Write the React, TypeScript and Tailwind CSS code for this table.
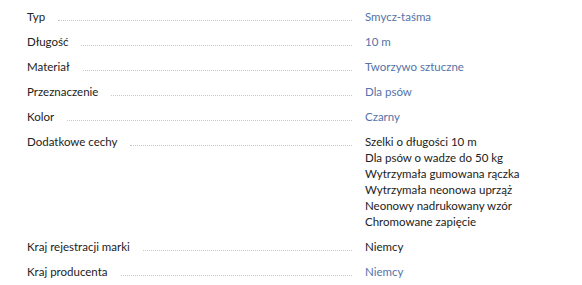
import React from "react";

type Row = { label: string; values: string[]; blue: boolean };

const rows: Row[] = [
  { label: "Typ", values: ["Smycz-taśma"], blue: true },
  { label: "Długość", values: ["10 m"], blue: true },
  { label: "Materiał", values: ["Tworzywo sztuczne"], blue: true },
  { label: "Przeznaczenie", values: ["Dla psów"], blue: true },
  { label: "Kolor", values: ["Czarny"], blue: true },
  {
    label: "Dodatkowe cechy",
    values: [
      "Szelki o długości 10 m",
      "Dla psów o wadze do 50 kg",
      "Wytrzymała gumowana rączka",
      "Wytrzymała neonowa uprząż",
      "Neonowy nadrukowany wzór",
      "Chromowane zapięcie",
    ],
    blue: false,
  },
  { label: "Kraj rejestracji marki", values: ["Niemcy"], blue: false },
  { label: "Kraj producenta", values: ["Niemcy"], blue: true },
];

export default function App() {
  return (
    <div
      className="w-[582px] h-[285px] bg-white pl-[27px] pt-[9px] text-[11.5px] leading-[16px] text-[#222222]"
      style={{ fontFamily: "Lato, 'Open Sans', sans-serif" }}
    >
      <div className="flex flex-col gap-[9px]">
        {rows.map((r) => (
          <div key={r.label} className="flex items-start">
            <div className="flex w-[325px] items-start">
              <span className="whitespace-nowrap">{r.label}</span>
              <span className="ml-[13px] mt-[11px] h-0 flex-1 border-b border-dotted border-[#c8c8c8]" />
            </div>
            <div className="ml-[13px] flex flex-col">
              {r.values.map((v) => (
                <span key={v} className={r.blue ? "text-[#5573a8]" : "text-[#222222]"}>
                  {v}
                </span>
              ))}
            </div>
          </div>
        ))}
      </div>
    </div>
  );
}
